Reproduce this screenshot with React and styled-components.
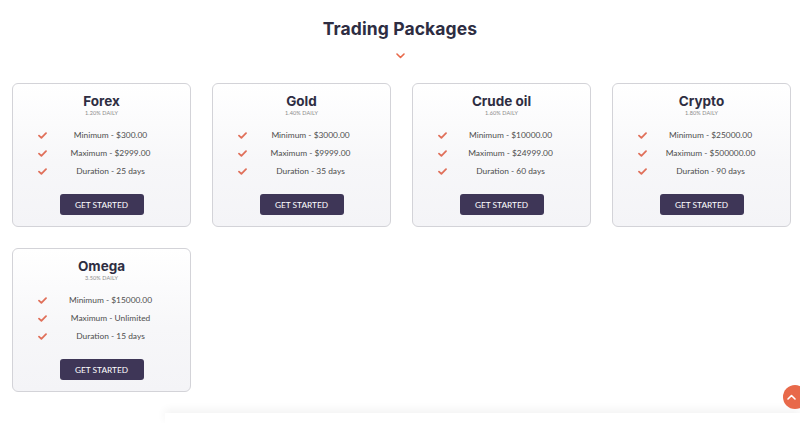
import styled, { createGlobalStyle } from "styled-components";

const GlobalStyle = createGlobalStyle`
  html, body {
    margin: 0;
    padding: 0;
    background: #ffffff;
    overflow: hidden;
  }
  * {
    box-sizing: border-box;
  }
`;

const packages = [
  { name: "Forex", rate: "1.20% Daily", min: "$300.00", max: "$2999.00", days: 25 },
  { name: "Gold", rate: "1.40% Daily", min: "$3000.00", max: "$9999.00", days: 35 },
  { name: "Crude oil", rate: "1.60% Daily", min: "$10000.00", max: "$24999.00", days: 60 },
  { name: "Crypto", rate: "1.80% Daily", min: "$25000.00", max: "$500000.00", days: 90 },
  { name: "Omega", rate: "3.50% Daily", min: "$15000.00", max: "Unlimited", days: 15 },
];

function Check() {
  return (
    <svg width="9" height="7" viewBox="0 0 9 7">
      <path
        d="M1 3.6 L3.4 5.8 L8 1.2"
        fill="none"
        stroke="#e0705a"
        strokeWidth="1.8"
        strokeLinecap="round"
        strokeLinejoin="round"
      />
    </svg>
  );
}

export default function App() {
  return (
    <Page>
      <GlobalStyle />
      <Heading>Trading Packages</Heading>
      <Chevron>
        <svg width="9" height="6" viewBox="0 0 9 6">
          <path
            d="M1 1 L4.5 4.5 L8 1"
            fill="none"
            stroke="#e8694a"
            strokeWidth="1.6"
            strokeLinecap="round"
            strokeLinejoin="round"
          />
        </svg>
      </Chevron>
      <Grid>
        {packages.map((p) => (
          <Card key={p.name}>
            <Name>{p.name}</Name>
            <Rate>{p.rate}</Rate>
            <List>
              <Row>
                <Check />
                <span>Minimum - {p.min}</span>
              </Row>
              <Row>
                <Check />
                <span>Maximum - {p.max}</span>
              </Row>
              <Row>
                <Check />
                <span>Duration - {p.days} days</span>
              </Row>
            </List>
            <Button>Get Started</Button>
          </Card>
        ))}
      </Grid>
      <Footer />
      <ToTop>
        <svg width="9" height="6" viewBox="0 0 9 6">
          <path
            d="M1 5 L4.5 1.5 L8 5"
            fill="none"
            stroke="#ffffff"
            strokeWidth="1.6"
            strokeLinecap="round"
            strokeLinejoin="round"
          />
        </svg>
      </ToTop>
    </Page>
  );
}

const Page = styled.div`
  width: 800px;
  height: 423px;
  overflow: hidden;
  display: flex;
  flex-direction: column;
  align-items: stretch;
  padding-top: 17px;
  font-family: "Lato", "Liberation Sans", sans-serif;
`;

const Heading = styled.h1`
  margin: 0;
  text-align: center;
  font-family: "Inter", "Noto Sans", sans-serif;
  font-weight: 700;
  font-size: 17.5px;
  line-height: 24px;
  letter-spacing: 0.1px;
  color: #2e2d42;
`;

const Chevron = styled.div`
  display: flex;
  justify-content: center;
  margin-top: 12px;
  height: 6px;
`;

const Grid = styled.div`
  display: grid;
  grid-template-columns: repeat(4, 179px);
  column-gap: 21px;
  row-gap: 21px;
  padding-left: 12px;
  margin-top: 24px;
`;

const Card = styled.div`
  height: 144px;
  border: 1px solid #d3d3d8;
  border-radius: 6px;
  background: linear-gradient(180deg, #ffffff 0%, #f7f7f9 55%, #f4f4f7 100%);
  display: flex;
  flex-direction: column;
  align-items: center;
  padding-top: 9px;
`;

const Name = styled.div`
  font-family: "Inter", "Noto Sans", sans-serif;
  font-weight: 700;
  font-size: 13.5px;
  line-height: 16px;
  color: #2e2d42;
`;

const Rate = styled.div`
  font-size: 5.5px;
  line-height: 8px;
  text-transform: uppercase;
  color: #8a8a8a;
  letter-spacing: 0.1px;
`;

const List = styled.div`
  margin-top: 9px;
  width: 100%;
  display: flex;
  flex-direction: column;
`;

const Row = styled.div`
  display: grid;
  grid-template-columns: 10px 1fr;
  align-items: center;
  padding: 0 17px 0 25px;
  height: 18px;
  font-size: 8.4px;
  color: #4d4d4d;
  span {
    text-align: center;
  }
`;

const Button = styled.button`
  margin-top: 14px;
  width: 84px;
  height: 21px;
  border: none;
  border-radius: 3px;
  background: #3e3657;
  color: #ffffff;
  font-family: "Lato", "Liberation Sans", sans-serif;
  font-size: 8.3px;
  text-transform: uppercase;
  padding: 0;
`;

const Footer = styled.div`
  margin-top: 21px;
  margin-left: 165px;
  height: 60px;
  background: #ffffff;
  box-shadow: 0 -3px 10px rgba(0, 0, 0, 0.06);
`;

const ToTop = styled.div`
  position: fixed;
  right: -7px;
  bottom: 14px;
  width: 24px;
  height: 24px;
  border-radius: 50%;
  background: #e8694a;
  display: flex;
  align-items: center;
  justify-content: center;
  padding-right: 7px;
`;
